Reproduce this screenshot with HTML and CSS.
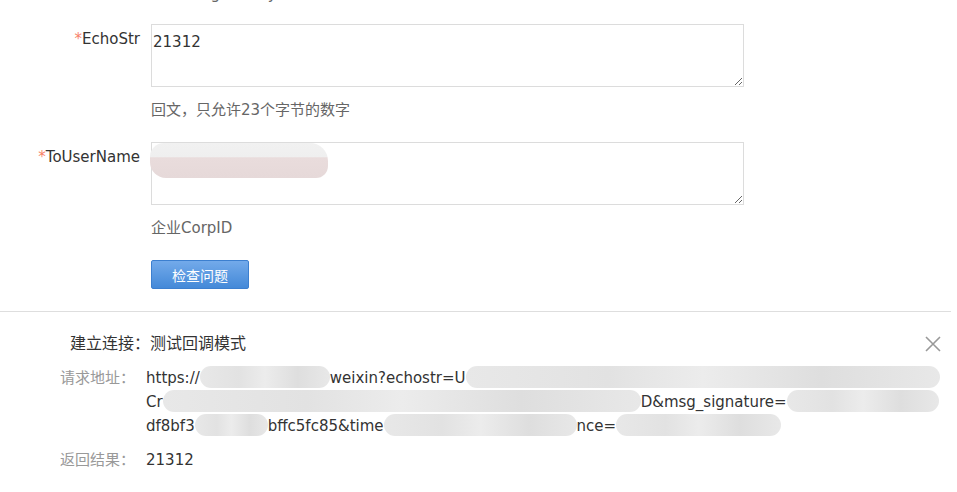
FILE: index.html
```html
<!DOCTYPE html>
<html lang="zh-CN">
<head>
    <meta charset="UTF-8">
    <meta name="viewport" content="width=device-width, initial-scale=1.0">
    <title>回调模式检查</title>
    <link rel="stylesheet" href="styles.css">
</head>
<body>
    <div class="page">
        <div class="check-form">
            <div class="form-row top-cut">
                <div class="form-label"></div>
                <div class="form-field">
                    <div class="field-tip">EncodingAESKey</div>
                </div>
            </div>

            <div class="form-row">
                <label class="form-label"><span class="req">*</span>EchoStr</label>
                <div class="form-field">
                    <textarea class="field-input">21312</textarea>
                    <div class="field-tip">回文，只允许23个字节的数字</div>
                </div>
            </div>

            <div class="form-row">
                <label class="form-label"><span class="req">*</span>ToUserName</label>
                <div class="form-field">
                    <div class="input-wrap">
                        <textarea class="field-input"></textarea>
                        <!-- masked value -->
                        <span class="mask-blob"></span>
                    </div>
                    <div class="field-tip">企业CorpID</div>
                </div>
            </div>

            <div class="form-row">
                <div class="form-label"></div>
                <div class="form-field">
                    <button class="btn-check" onclick="checkIssue()">检查问题</button>
                </div>
            </div>
        </div>

        <div class="result-panel">
            <div class="result-head">
                <div class="result-title">建立连接：测试回调模式</div>
                <button class="result-close" aria-label="关闭">
                    <svg width="16" height="16" viewBox="0 0 16 16">
                        <path d="M1 1 L15 15 M15 1 L1 15" stroke="#999" stroke-width="1.6" fill="none"/>
                    </svg>
                </button>
            </div>

            <div class="result-item">
                <div class="result-label">请求地址：</div>
                <div class="result-value">
                    <div class="url-line">https://<span class="blur w130"></span>weixin?echostr=U<span class="blur w474"></span></div>
                    <div class="url-line">Cr<span class="blur w478"></span>D&amp;msg_signature=<span class="blur w152"></span></div>
                    <div class="url-line">df8bf3<span class="blur w73"></span>bffc5fc85&amp;time<span class="blur w193"></span>nce=<span class="blur w165"></span></div>
                </div>
            </div>

            <div class="result-item">
                <div class="result-label">返回结果：</div>
                <div class="result-value">21312</div>
            </div>
        </div>
    </div>

    <script>
        function checkIssue() {
            // nothing to send in the sandbox
            document.querySelector('.result-panel').style.display = '';
        }

        document.querySelector('.result-close').addEventListener('click', function () {
            document.querySelector('.result-panel').style.display = 'none';
        });
    </script>
</body>
</html>
```

FILE: styles.css
```css
body {
    margin: 0;
    font-family: "DejaVu Sans", "Noto Sans CJK SC", sans-serif;
    font-size: 15px;
    color: #333;
    background-color: #fff;
    overflow: hidden;
}

.page {
    width: 951px;
}

.check-form {
    padding-bottom: 22px;
}

.form-row {
    display: flex;
    margin-top: 21px;
}

.form-row.top-cut {
    margin-top: -17px;
}

.top-cut + .form-row {
    margin-top: 19px;
}

.form-label {
    width: 140px;
    flex-shrink: 0;
    padding-right: 11px;
    padding-top: 4px;
    text-align: right;
    line-height: 22px;
    color: #333;
}

.top-cut .form-label {
    padding-top: 0;
}

.req {
    color: #f7826a;
}

.form-field {
    width: 593px;
}

.field-input {
    display: block;
    box-sizing: border-box;
    width: 593px;
    height: 63px;
    margin: 0;
    padding: 5px 1px;
    border: 1px solid #dcdcdc;
    border-radius: 0;
    font-family: inherit;
    font-size: 15px;
    line-height: 24px;
    color: #333;
    outline: none;
}

.input-wrap {
    position: relative;
}

.mask-blob {
    position: absolute;
    left: -1px;
    top: 1px;
    width: 178px;
    height: 35px;
    border-radius: 14px 18px 12px 16px;
    background: linear-gradient(#f1f1f1 0, #efefef 40%, #e9dcdc 42%, #e6d9d9 100%);
}

.field-tip {
    margin-top: 12px;
    line-height: 22px;
    color: #666;
}

.top-cut .field-tip {
    margin-top: 0;
}

.btn-check {
    width: 98px;
    height: 29px;
    padding: 0;
    border: 1px solid #3c7fcf;
    border-radius: 2px;
    background: linear-gradient(#73aaea, #4489d8);
    color: #fff;
    font-family: inherit;
    font-size: 14px;
    cursor: pointer;
}

.btn-check:hover {
    background: linear-gradient(#5f9be0, #3578c8);
}

.result-panel {
    border-top: 1px solid #dedede;
    padding: 20px 10px 20px 0;
}

.result-head {
    display: flex;
    justify-content: space-between;
    align-items: center;
    padding-left: 70px;
    line-height: 24px;
}

.result-title {
    font-size: 16px;
    color: #333;
}

.result-close {
    width: 16px;
    height: 16px;
    padding: 0;
    border: none;
    background: none;
    cursor: pointer;
}

.result-close svg {
    display: block;
}

.result-item {
    display: flex;
    margin-top: 10px;
    line-height: 24px;
}

.result-label {
    width: 75px;
    padding-left: 60px;
    padding-right: 11px;
    flex-shrink: 0;
    color: #999;
}

.result-value {
    color: #333;
}

.url-line {
    white-space: nowrap;
    height: 24px;
}

.blur {
    display: inline-block;
    height: 22px;
    vertical-align: -5px;
    border-radius: 11px;
    background: linear-gradient(90deg, #e8e8e8, #e2e2e2 30%, #ececec 50%, #dedede 75%, #e8e8e8);
}

.w73 { width: 73px; }
.w130 { width: 130px; }
.w152 { width: 152px; }
.w165 { width: 165px; }
.w193 { width: 193px; }
.w474 { width: 474px; }
.w478 { width: 478px; }
```
